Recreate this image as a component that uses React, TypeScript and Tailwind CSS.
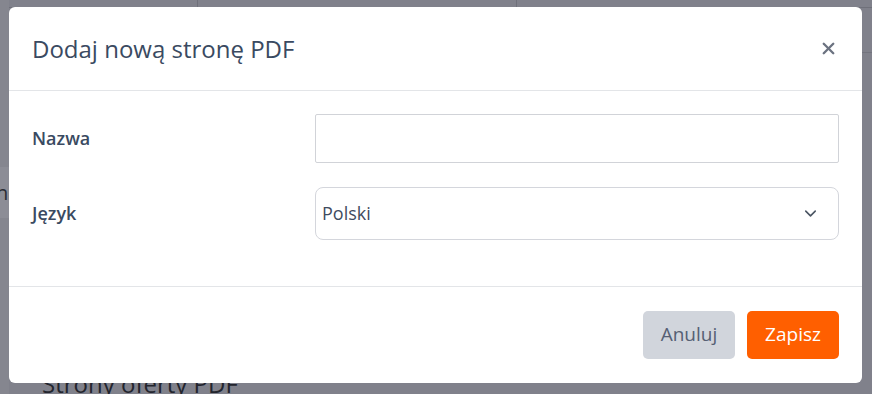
import { ChevronDown, X } from "lucide-react";

export default function App() {
  return (
    <div
      className="relative w-[872px] h-[394px] overflow-hidden bg-[#80818b]"
      style={{ fontFamily: '"Open Sans", "Noto Sans", sans-serif' }}
    >
      {/* Dimmed page behind */}
      <div className="absolute inset-0">
        <div className="h-[8px] border-b border-[#6f707a] flex">
          <div className="ml-[197px] w-[320px] border-x border-[#6f707a]" />
        </div>
        <div className="mt-[44px] border-t border-[#73747e]" />
        <div className="absolute left-0 top-0 w-[9px] h-full bg-[#85868f]" />
        <div className="absolute left-0 top-[167px] w-[9px] h-[51px] bg-[#8c8d96] text-[#2b2d35] text-[20px] leading-[51px] overflow-hidden">
          <span className="-ml-[4px]">n</span>
        </div>
        <div className="absolute left-[42px] top-[366px] text-[24px] font-medium text-[#23252e]">
          Strony oferty PDF
        </div>
      </div>

      {/* Modal */}
      <div className="absolute left-[9px] top-[7px] w-[853px] h-[376px] bg-white rounded-[6px] flex flex-col">
        <div className="h-[84px] border-b border-[#e3e5e8] flex items-center justify-between pl-[23px] pr-[24px]">
          <h2 className="text-[24px] font-medium text-[#3a4a61] pt-[1px]">Dodaj nową stronę PDF</h2>
          <X className="w-[19px] h-[19px] text-[#6b7280]" strokeWidth={3} />
        </div>

        <div className="flex-1 px-[23px] pt-[23px] flex flex-col gap-[24px] border-b border-[#e3e5e8]">
          <div className="flex items-center">
            <label className="w-[283px] text-[18px] font-semibold text-[#3a4a61]">Nazwa</label>
            <input
              className="w-[524px] h-[49px] border border-[#d1d3d8] rounded-[2px] outline-none px-[7px] text-[18px]"
            />
          </div>
          <div className="flex items-center">
            <label className="w-[283px] text-[18px] font-semibold text-[#3a4a61]">Język</label>
            <div className="w-[524px] h-[53px] border border-[#d4d6dc] rounded-[8px] flex items-center justify-between pl-[6px] pr-[18px]">
              <span className="text-[18px] text-[#3f4b5e]">Polski</span>
              <ChevronDown className="w-[19px] h-[19px] text-[#4b5563]" strokeWidth={2} />
            </div>
          </div>
        </div>

        <div className="h-[96px] flex items-center justify-end gap-[12px] pr-[23px] pb-[1px]">
          <button className="w-[92px] h-[48px] rounded-[5px] bg-[#d1d5dc] text-[#566074] text-[19px]">
            Anuluj
          </button>
          <button className="w-[92px] h-[48px] rounded-[5px] bg-[#ff5f00] text-white text-[19px]">
            Zapisz
          </button>
        </div>
      </div>
    </div>
  );
}
